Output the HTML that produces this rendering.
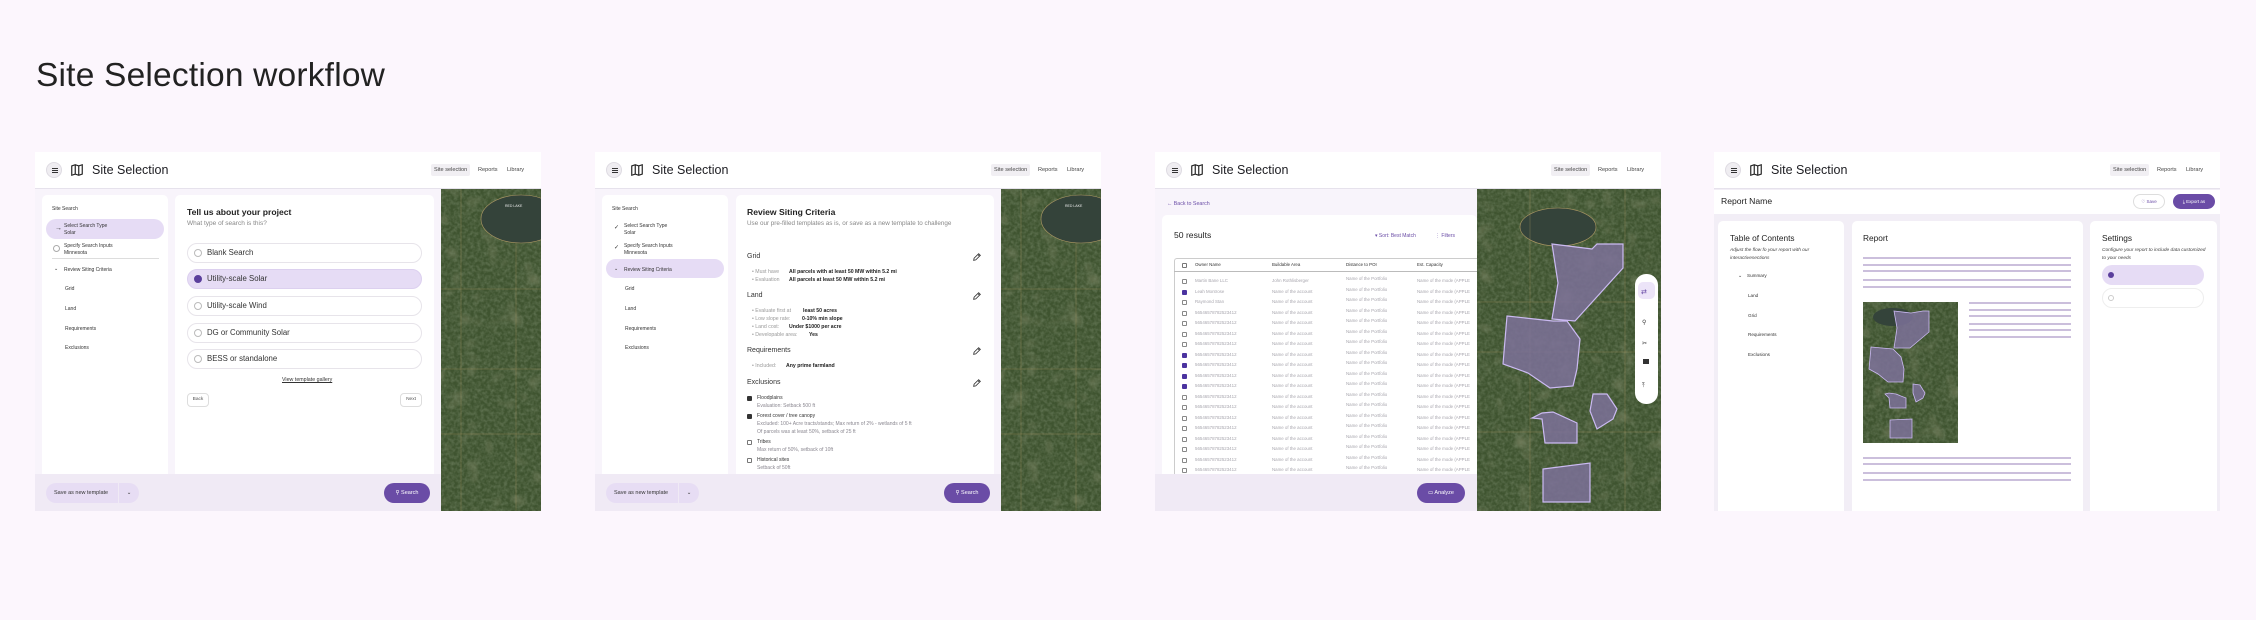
<!DOCTYPE html>
<html><head><meta charset="utf-8"><style>
*{margin:0;padding:0;box-sizing:border-box}
body{width:2256px;height:620px;background:#fcf6fd;font-family:"Liberation Sans",sans-serif;position:relative;overflow:hidden;color:#1f1f24}
.abs{position:absolute}
h1{position:absolute;left:36px;top:57px;font-size:33.5px;font-weight:400;color:#222;letter-spacing:0.2px}
.panel{position:absolute;top:152px;width:506px;height:359px;background:#f8f4fb;overflow:hidden}
.hdr{position:absolute;left:0;top:0;width:506px;height:37px;background:#fff;border-bottom:1px solid #e6e2ec}
.menu{position:absolute;left:11px;top:10px;width:16px;height:16px;border-radius:50%;background:#efedf1;border:1px solid #dedbe2}
.menu i{position:absolute;left:4.5px;width:6px;height:1px;background:#333}
.title{position:absolute;left:57px;top:11px;font-size:12.5px;color:#1d1d22}
.nav{position:absolute;top:12px;font-size:5.6px;color:#444;height:12px;line-height:12px}
.navsel{background:#f1eff3;border-radius:2px;padding:0 3px}
.card{position:absolute;background:#fff;border-radius:5px}
.t5{font-size:5px;color:#333;position:absolute;white-space:nowrap}
.g{color:#8a8790}
.foot{position:absolute;left:0;top:322px;height:37px;background:#f0eaf5}
.pill{position:absolute;background:#e7ddf4;font-size:5.5px;color:#333;line-height:20px;top:9px;height:20px}
.btn{position:absolute;top:9px;height:20px;border-radius:10px;background:#6a4ca6;color:#fff;font-size:5.5px;line-height:20px;text-align:center}
.opt{position:absolute;left:152px;width:235px;height:20px;border-radius:10px;border:1px solid #e7e4ea;background:#fff;font-size:7.8px;line-height:18px;padding-left:19px;color:#333}
.opt b{position:absolute;left:6px;top:5px;width:8px;height:8px;border-radius:50%;border:1px solid #bbb}
.map{position:absolute;top:37px}
.sec{position:absolute;left:152px;font-size:7px;color:#333}
.pen{position:absolute;left:377px;width:10px;height:10px}
.li{position:absolute;left:157px;font-size:5.2px;color:#999;white-space:nowrap}
.li b{color:#222;position:absolute}
.cb{position:absolute;width:5px;height:5px;border:0.8px solid #777;border-radius:1px}
.cbk{background:#333;border-color:#333}
.row{position:absolute;left:19px;width:300px;height:10.5px;font-size:4.4px;color:#a8a6ae;white-space:nowrap}
.row span{position:absolute;top:2px}
.row .c{left:8px;top:3px;width:5px;height:5px;border:0.8px solid #888;border-radius:1px}
.row .k{background:#4b33a0;border-color:#4b33a0}
.ln{position:absolute;height:2px;background:#cbbfdc}
</style></head><body>
<h1>Site Selection workflow</h1>

<svg width="0" height="0" style="position:absolute"><defs>
<filter id="n" x="0" y="0" width="100%" height="100%"><feTurbulence type="fractalNoise" baseFrequency="0.3" numOctaves="2" seed="3"/><feColorMatrix values="0 0 0 0 0.16  0 0 0 0 0.22  0 0 0 0 0.12  0 0 0 1.2 -0.4"/></filter>
<filter id="n2" x="0" y="0" width="100%" height="100%"><feTurbulence type="fractalNoise" baseFrequency="0.05" numOctaves="2" seed="7"/><feColorMatrix values="0 0 0 0 0.42  0 0 0 0 0.4  0 0 0 0 0.26  0 0 0 1.2 -0.7"/></filter>
</defs></svg>

<!-- PANEL 1 -->
<div class="panel" style="left:35px">
 <div class="hdr">
  <div class="menu"><i style="top:5px"></i><i style="top:7px"></i><i style="top:9px"></i></div>
  <svg class="abs" style="left:35px;top:11px" width="14" height="14" viewBox="0 0 24 24" fill="none" stroke="#222" stroke-width="2"><path d="M3 5l6-2 6 2 6-2v16l-6 2-6-2-6 2z M9 3v16 M15 5v16"/></svg>
  <div class="title">Site Selection</div>
  <div class="nav navsel" style="left:396px">Site selection</div>
  <div class="nav" style="left:443px">Reports</div>
  <div class="nav" style="left:472px">Library</div>
 </div>
 <div class="card" style="left:7px;top:43px;width:126px;height:290px"></div>
 <div class="t5" style="left:17px;top:54px">Site Search</div>
 <div class="abs" style="left:11px;top:67px;width:118px;height:20px;border-radius:10px;background:#e6dcf5"></div>
 <div class="t5" style="left:20px;top:73px;font-size:7px">→</div>
 <div class="t5" style="left:29px;top:71px;line-height:7px">Select Search Type<br>Solar</div>
 <div class="abs" style="left:18px;top:93px;width:7px;height:7px;border-radius:50%;border:1px solid #aaa"></div>
 <div class="t5" style="left:29px;top:91px;line-height:7px">Specify Search Inputs<br>Minnesota</div>
 <div class="abs" style="left:17px;top:106px;width:107px;height:1px;background:#ddd"></div>
 <div class="t5" style="left:19px;top:114px">⌄</div>
 <div class="t5" style="left:29px;top:115px">Review Siting Criteria</div>
 <div class="t5" style="left:30px;top:134px">Grid</div>
 <div class="t5" style="left:30px;top:154px">Land</div>
 <div class="t5" style="left:30px;top:174px">Requirements</div>
 <div class="t5" style="left:30px;top:193px">Exclusions</div>

 <div class="card" style="left:140px;top:43px;width:259px;height:290px"></div>
 <div class="abs" style="left:152px;top:55px;font-size:8.6px;font-weight:bold;color:#222">Tell us about your project</div>
 <div class="abs" style="left:152px;top:68px;font-size:6.5px;color:#888">What type of search is this?</div>
 <div class="opt" style="top:91px"><b></b>Blank Search</div>
 <div class="opt" style="top:117px;background:#e6dcf5;border-color:#dcd0ef"><b style="background:#5b3f9c;border-color:#5b3f9c"></b>Utility-scale Solar</div>
 <div class="opt" style="top:144px"><b></b>Utility-scale Wind</div>
 <div class="opt" style="top:171px"><b></b>DG or Community Solar</div>
 <div class="opt" style="top:197px"><b></b>BESS or standalone</div>
 <div class="t5" style="left:247px;top:225px;text-decoration:underline;font-size:5.3px">View template gallery</div>
 <div class="abs" style="left:152px;top:241px;width:22px;height:14px;border:1px solid #ddd;border-radius:4px;background:#fff;font-size:4.8px;text-align:center;line-height:12px;color:#555">Back</div>
 <div class="abs" style="left:365px;top:241px;width:22px;height:14px;border:1px solid #ddd;border-radius:4px;background:#fff;font-size:4.8px;text-align:center;line-height:12px;color:#555">Next</div>

 <div class="foot" style="width:406px">
  <div class="pill" style="left:11px;width:72px;border-radius:10px 0 0 10px;padding-left:8px">Save as new template</div>
  <div class="pill" style="left:84px;width:20px;border-radius:0 10px 10px 0;text-align:center">⌄</div>
  <div class="btn" style="left:349px;width:46px">⚲ Search</div>
 </div>
 <svg class="map" style="left:406px" width="100" height="322">
  <rect width="100" height="322" fill="#3f5430"/>
  <rect width="100" height="322" filter="url(#n2)"/>
  <rect width="100" height="322" filter="url(#n)"/>
  <ellipse cx="80" cy="30" rx="40" ry="24" fill="#34433a" stroke="#b09a66" stroke-width=".6"/>
  <path d="M0 100 H100 M0 180 H100 M20 0 V322 M75 54 V322 M0 245 H100" stroke="#b09a66" stroke-width=".5" opacity=".6" fill="none"/>
  <text x="64" y="18" font-size="3.5" fill="#eee" font-family="Liberation Sans">RED LAKE</text>
 </svg>
</div>

<!-- PANEL 2 -->
<div class="panel" style="left:595px">
 <div class="hdr">
  <div class="menu"><i style="top:5px"></i><i style="top:7px"></i><i style="top:9px"></i></div>
  <svg class="abs" style="left:35px;top:11px" width="14" height="14" viewBox="0 0 24 24" fill="none" stroke="#222" stroke-width="2"><path d="M3 5l6-2 6 2 6-2v16l-6 2-6-2-6 2z M9 3v16 M15 5v16"/></svg>
  <div class="title">Site Selection</div>
  <div class="nav navsel" style="left:396px">Site selection</div>
  <div class="nav" style="left:443px">Reports</div>
  <div class="nav" style="left:472px">Library</div>
 </div>
 <div class="card" style="left:7px;top:43px;width:126px;height:290px"></div>
 <div class="t5" style="left:17px;top:54px">Site Search</div>
 <div class="t5" style="left:19px;top:72px;font-size:6px">✓</div>
 <div class="t5" style="left:29px;top:71px;line-height:7px">Select Search Type<br>Solar</div>
 <div class="t5" style="left:19px;top:92px;font-size:6px">✓</div>
 <div class="t5" style="left:29px;top:91px;line-height:7px">Specify Search Inputs<br>Minnesota</div>
 <div class="abs" style="left:11px;top:107px;width:118px;height:19px;border-radius:10px;background:#e6dcf5"></div>
 <div class="t5" style="left:19px;top:114px">⌄</div>
 <div class="t5" style="left:29px;top:115px">Review Siting Criteria</div>
 <div class="t5" style="left:30px;top:134px">Grid</div>
 <div class="t5" style="left:30px;top:154px">Land</div>
 <div class="t5" style="left:30px;top:174px">Requirements</div>
 <div class="t5" style="left:30px;top:193px">Exclusions</div>

 <div class="card" style="left:141px;top:43px;width:258px;height:290px"></div>
 <div class="abs" style="left:152px;top:55px;font-size:8.6px;font-weight:bold;color:#222">Review Siting Criteria</div>
 <div class="abs" style="left:152px;top:68px;font-size:6.3px;color:#888;width:215px;line-height:8.5px">Use our pre-filled templates as is, or save as a new template to challenge</div>
 <div class="sec" style="top:101px">Grid</div>
 <div class="li" style="top:117px">• Must have <b style="left:37px">All parcels with at least 50 MW within 5.2 mi</b></div>
 <div class="li" style="top:125px">• Evaluation <b style="left:37px">All parcels at least 50 MW within 5.2 mi</b></div>
 <div class="sec" style="top:140px">Land</div>
 <div class="li" style="top:156px">• Evaluate first at <b style="left:51px">least 50 acres</b></div>
 <div class="li" style="top:164px">• Low slope rate: <b style="left:50px">0-10% min slope</b></div>
 <div class="li" style="top:172px">• Land cost: <b style="left:37px">Under $1000 per acre</b></div>
 <div class="li" style="top:180px">• Developable area: <b style="left:57px">Yes</b></div>
 <div class="sec" style="top:195px">Requirements</div>
 <div class="li" style="top:211px">• Included: <b style="left:34px">Any prime farmland</b></div>
 <div class="sec" style="top:227px">Exclusions</div>
 <div class="cb cbk" style="left:152px;top:244px"></div>
 <div class="t5" style="left:162px;top:243px">Floodplains</div>
 <div class="t5 g" style="left:162px;top:251px">Evaluation: Setback 500 ft</div>
 <div class="cb cbk" style="left:152px;top:262px"></div>
 <div class="t5" style="left:162px;top:261px">Forest cover / tree canopy</div>
 <div class="t5 g" style="left:162px;top:269px">Excluded: 100+ Acre tracts/stands; Max return of 2% - wetlands of 5 ft</div>
 <div class="t5 g" style="left:162px;top:277px">Of parcels was at least 50%, setback of 25 ft</div>
 <div class="cb" style="left:152px;top:288px"></div>
 <div class="t5" style="left:162px;top:287px">Tribes</div>
 <div class="t5 g" style="left:162px;top:295px">Max return of 50%, setback of 10ft</div>
 <div class="cb" style="left:152px;top:306px"></div>
 <div class="t5" style="left:162px;top:305px">Historical sites</div>
 <div class="t5 g" style="left:162px;top:313px">Setback of 50ft</div>
 <svg class="pen" style="top:100px" viewBox="0 0 24 24" fill="none" stroke="#333" stroke-width="2"><path d="M4 20l1-5L16 4l4 4L9 19z M14 6l4 4"/></svg>
 <svg class="pen" style="top:139px" viewBox="0 0 24 24" fill="none" stroke="#333" stroke-width="2"><path d="M4 20l1-5L16 4l4 4L9 19z M14 6l4 4"/></svg>
 <svg class="pen" style="top:194px" viewBox="0 0 24 24" fill="none" stroke="#333" stroke-width="2"><path d="M4 20l1-5L16 4l4 4L9 19z M14 6l4 4"/></svg>
 <svg class="pen" style="top:226px" viewBox="0 0 24 24" fill="none" stroke="#333" stroke-width="2"><path d="M4 20l1-5L16 4l4 4L9 19z M14 6l4 4"/></svg>

 <div class="foot" style="width:406px">
  <div class="pill" style="left:11px;width:72px;border-radius:10px 0 0 10px;padding-left:8px">Save as new template</div>
  <div class="pill" style="left:84px;width:20px;border-radius:0 10px 10px 0;text-align:center">⌄</div>
  <div class="btn" style="left:349px;width:46px">⚲ Search</div>
 </div>
 <svg class="map" style="left:406px" width="100" height="322">
  <rect width="100" height="322" fill="#3f5430"/>
  <rect width="100" height="322" filter="url(#n2)"/>
  <rect width="100" height="322" filter="url(#n)"/>
  <ellipse cx="80" cy="30" rx="40" ry="24" fill="#34433a" stroke="#b09a66" stroke-width=".6"/>
  <path d="M0 100 H100 M0 180 H100 M20 0 V322 M75 54 V322 M0 245 H100" stroke="#b09a66" stroke-width=".5" opacity=".6" fill="none"/>
  <text x="64" y="18" font-size="3.5" fill="#eee" font-family="Liberation Sans">RED LAKE</text>
 </svg>
</div>

<!-- PANEL 3 -->
<div class="panel" style="left:1155px">
 <div class="hdr">
  <div class="menu"><i style="top:5px"></i><i style="top:7px"></i><i style="top:9px"></i></div>
  <svg class="abs" style="left:35px;top:11px" width="14" height="14" viewBox="0 0 24 24" fill="none" stroke="#222" stroke-width="2"><path d="M3 5l6-2 6 2 6-2v16l-6 2-6-2-6 2z M9 3v16 M15 5v16"/></svg>
  <div class="title">Site Selection</div>
  <div class="nav navsel" style="left:396px">Site selection</div>
  <div class="nav" style="left:443px">Reports</div>
  <div class="nav" style="left:472px">Library</div>
 </div>
 <div class="t5" style="left:12px;top:49px;color:#6a4ca6;font-size:5.3px">← Back to Search</div>
 <div class="card" style="left:7px;top:63px;width:315px;height:280px"></div>
 <div class="abs" style="left:19px;top:78px;font-size:8.6px;color:#222">50 results</div>
 <div class="t5" style="left:220px;top:81px;color:#6a4ca6">▾ Sort: Best Match</div>
 <div class="t5" style="left:280px;top:81px;color:#6a4ca6">⋮ Filters</div>
 <div class="abs" style="left:19px;top:106px;width:310px;height:230px;border:1px solid #ccc;border-right:none;border-radius:3px 0 0 0"></div>
 <div class="abs" style="left:19px;top:119px;width:310px;height:1px;background:#bbb"></div>
 <div class="cb" style="left:27px;top:111px"></div>
 <div class="t5" style="left:40px;top:110px;font-size:4.4px">Owner Name</div>
 <div class="t5" style="left:117px;top:110px;font-size:4.4px">Buildable Area</div>
 <div class="t5" style="left:191px;top:110px;font-size:4.4px">Distance to POI</div>
 <div class="t5" style="left:262px;top:110px;font-size:4.4px">Est. Capacity</div>
 <div class="row" style="top:124px"><i class="abs c"></i><span style="left:21px">Martin Bane LLC</span><span style="left:98px">John Rothlisberger</span><span style="left:172px;top:0">Name of the Portfolio</span><span style="left:243px">Name of the mode (APPLE</span></div>
 <div class="row" style="top:134.5px"><i class="abs c k"></i><span style="left:21px">Leah Montrose</span><span style="left:98px">Name of the account</span><span style="left:172px;top:0">Name of the Portfolio</span><span style="left:243px">Name of the mode (APPLE</span></div>
 <div class="row" style="top:145px"><i class="abs c"></i><span style="left:21px">Raymond Stan</span><span style="left:98px">Name of the account</span><span style="left:172px;top:0">Name of the Portfolio</span><span style="left:243px">Name of the mode (APPLE</span></div>
 <div class="row" style="top:155.5px"><i class="abs c"></i><span style="left:21px">56546578782523412</span><span style="left:98px">Name of the account</span><span style="left:172px;top:0">Name of the Portfolio</span><span style="left:243px">Name of the mode (APPLE</span></div>
 <div class="row" style="top:166px"><i class="abs c"></i><span style="left:21px">56546578782523412</span><span style="left:98px">Name of the account</span><span style="left:172px;top:0">Name of the Portfolio</span><span style="left:243px">Name of the mode (APPLE</span></div>
 <div class="row" style="top:176.5px"><i class="abs c"></i><span style="left:21px">56546578782523412</span><span style="left:98px">Name of the account</span><span style="left:172px;top:0">Name of the Portfolio</span><span style="left:243px">Name of the mode (APPLE</span></div>
 <div class="row" style="top:187px"><i class="abs c"></i><span style="left:21px">56546578782523412</span><span style="left:98px">Name of the account</span><span style="left:172px;top:0">Name of the Portfolio</span><span style="left:243px">Name of the mode (APPLE</span></div>
 <div class="row" style="top:197.5px"><i class="abs c k"></i><span style="left:21px">56546578782523412</span><span style="left:98px">Name of the account</span><span style="left:172px;top:0">Name of the Portfolio</span><span style="left:243px">Name of the mode (APPLE</span></div>
 <div class="row" style="top:208px"><i class="abs c k"></i><span style="left:21px">56546578782523412</span><span style="left:98px">Name of the account</span><span style="left:172px;top:0">Name of the Portfolio</span><span style="left:243px">Name of the mode (APPLE</span></div>
 <div class="row" style="top:218.5px"><i class="abs c k"></i><span style="left:21px">56546578782523412</span><span style="left:98px">Name of the account</span><span style="left:172px;top:0">Name of the Portfolio</span><span style="left:243px">Name of the mode (APPLE</span></div>
 <div class="row" style="top:229px"><i class="abs c k"></i><span style="left:21px">56546578782523412</span><span style="left:98px">Name of the account</span><span style="left:172px;top:0">Name of the Portfolio</span><span style="left:243px">Name of the mode (APPLE</span></div>
 <div class="row" style="top:239.5px"><i class="abs c"></i><span style="left:21px">56546578782523412</span><span style="left:98px">Name of the account</span><span style="left:172px;top:0">Name of the Portfolio</span><span style="left:243px">Name of the mode (APPLE</span></div>
 <div class="row" style="top:250px"><i class="abs c"></i><span style="left:21px">56546578782523412</span><span style="left:98px">Name of the account</span><span style="left:172px;top:0">Name of the Portfolio</span><span style="left:243px">Name of the mode (APPLE</span></div>
 <div class="row" style="top:260.5px"><i class="abs c"></i><span style="left:21px">56546578782523412</span><span style="left:98px">Name of the account</span><span style="left:172px;top:0">Name of the Portfolio</span><span style="left:243px">Name of the mode (APPLE</span></div>
 <div class="row" style="top:271px"><i class="abs c"></i><span style="left:21px">56546578782523412</span><span style="left:98px">Name of the account</span><span style="left:172px;top:0">Name of the Portfolio</span><span style="left:243px">Name of the mode (APPLE</span></div>
 <div class="row" style="top:281.5px"><i class="abs c"></i><span style="left:21px">56546578782523412</span><span style="left:98px">Name of the account</span><span style="left:172px;top:0">Name of the Portfolio</span><span style="left:243px">Name of the mode (APPLE</span></div>
 <div class="row" style="top:292px"><i class="abs c"></i><span style="left:21px">56546578782523412</span><span style="left:98px">Name of the account</span><span style="left:172px;top:0">Name of the Portfolio</span><span style="left:243px">Name of the mode (APPLE</span></div>
 <div class="row" style="top:302.5px"><i class="abs c"></i><span style="left:21px">56546578782523412</span><span style="left:98px">Name of the account</span><span style="left:172px;top:0">Name of the Portfolio</span><span style="left:243px">Name of the mode (APPLE</span></div>
 <div class="row" style="top:313px"><i class="abs c"></i><span style="left:21px">56546578782523412</span><span style="left:98px">Name of the account</span><span style="left:172px;top:0">Name of the Portfolio</span><span style="left:243px">Name of the mode (APPLE</span></div>
 <div class="foot" style="width:322px">
  <div class="btn" style="left:262px;width:48px">▭ Analyze</div>
 </div>
 <svg class="map" style="left:322px" width="184" height="322" viewBox="322 37 184 322">
  <rect x="322" y="37" width="184" height="322" fill="#3f5430"/>
  <rect x="322" y="37" width="184" height="322" filter="url(#n2)"/>
  <rect x="322" y="37" width="184" height="322" filter="url(#n)"/>
  <ellipse cx="403" cy="75" rx="38" ry="19" fill="#34433a" stroke="#b09a66" stroke-width=".6"/>
  <path d="M322 150 H506 M322 200 H506 M375 37 V359 M470 37 V359 M322 280 H506" stroke="#b09a66" stroke-width=".5" opacity=".6" fill="none"/>
  <g fill="#7d7199" fill-opacity=".85" stroke="#cbbaf2" stroke-width="1.2">
   <path d="M397 92L437 97L442 92L468 92L468 116L420 169L397 167L403 131Z"/>
   <path d="M352 164L398 169L412 169L425 187L422 217L418 234L395 236L373 221L348 212Z"/>
   <path d="M438 242L452 242L462 257L458 267L442 277L435 259Z"/>
   <path d="M377 266L387 261L398 260L422 271L422 291L390 291L387 267Z"/>
   <path d="M388 317L435 311L435 350L388 350Z"/>
  </g>
  <rect x="480" y="122" width="23" height="130" rx="11" fill="#fff"/>
  <rect x="483" y="130" width="17" height="17" rx="5" fill="#ece4f8"/>
  <text x="486" y="142" font-size="7" fill="#6a4ca6" font-family="DejaVu Sans">⇄</text>
  <text x="487" y="172" font-size="6" fill="#333" font-family="DejaVu Sans">⚲</text>
  <text x="487" y="193" font-size="6" fill="#333" font-family="DejaVu Sans">✂</text>
  <rect x="488" y="207" width="6" height="5" fill="#333"/>
  <text x="487" y="235" font-size="6" fill="#333" font-family="DejaVu Sans">⤒</text>
 </svg>
</div>

<!-- PANEL 4 -->
<div class="panel" style="left:1714px;background:#f2eef6">
 <div class="hdr">
  <div class="menu"><i style="top:5px"></i><i style="top:7px"></i><i style="top:9px"></i></div>
  <svg class="abs" style="left:35px;top:11px" width="14" height="14" viewBox="0 0 24 24" fill="none" stroke="#222" stroke-width="2"><path d="M3 5l6-2 6 2 6-2v16l-6 2-6-2-6 2z M9 3v16 M15 5v16"/></svg>
  <div class="title">Site Selection</div>
  <div class="nav navsel" style="left:396px">Site selection</div>
  <div class="nav" style="left:443px">Reports</div>
  <div class="nav" style="left:472px">Library</div>
 </div>
 <div class="abs" style="left:0;top:38px;width:506px;height:24px;background:#fff"></div>
 <div class="abs" style="left:7px;top:44px;font-size:8.6px;color:#222">Report Name</div>
 <div class="abs" style="left:419px;top:42px;width:32px;height:15px;border:1px solid #ddd;border-radius:8px;background:#fff;font-size:4.5px;color:#6a4ca6;text-align:center;line-height:13px">♡ Save</div>
 <div class="abs" style="left:459px;top:42px;width:42px;height:15px;border-radius:8px;background:#6a4ca6;font-size:4.5px;color:#fff;text-align:center;line-height:15px">⤓ Export as</div>

 <div class="card" style="left:4px;top:69px;width:126px;height:300px"></div>
 <div class="abs" style="left:16px;top:81px;font-size:8.3px;color:#222">Table of Contents</div>
 <div class="abs" style="left:16px;top:95px;font-size:4.8px;color:#444;font-style:italic;line-height:8px;width:105px">Adjust the flow fo your report with our interactivesections</div>
 <div class="t5" style="left:24px;top:121px">⌄</div>
 <div class="t5" style="left:33px;top:121px;font-size:4.6px">Summary</div>
 <div class="t5" style="left:34px;top:141px;font-size:4.6px">Land</div>
 <div class="t5" style="left:34px;top:161px;font-size:4.6px">Grid</div>
 <div class="t5" style="left:34px;top:180px;font-size:4.6px">Requirements</div>
 <div class="t5" style="left:34px;top:200px;font-size:4.6px">Exclusions</div>

 <div class="card" style="left:138px;top:69px;width:231px;height:300px"></div>
 <div class="abs" style="left:149px;top:81px;font-size:8.3px;color:#222">Report</div>
 <div class="ln" style="left:149px;top:105px;width:208px"></div>
 <div class="ln" style="left:149px;top:112px;width:208px"></div>
 <div class="ln" style="left:149px;top:118px;width:208px"></div>
 <div class="ln" style="left:149px;top:127px;width:208px"></div>
 <div class="ln" style="left:149px;top:134px;width:208px"></div>
 <div class="ln" style="left:255px;top:150px;width:102px"></div>
 <div class="ln" style="left:255px;top:157px;width:102px"></div>
 <div class="ln" style="left:255px;top:163px;width:102px"></div>
 <div class="ln" style="left:255px;top:171px;width:102px"></div>
 <div class="ln" style="left:255px;top:177px;width:102px"></div>
 <div class="ln" style="left:255px;top:184px;width:102px"></div>
 <div class="ln" style="left:149px;top:305px;width:208px"></div>
 <div class="ln" style="left:149px;top:311px;width:208px"></div>
 <div class="ln" style="left:149px;top:320px;width:208px"></div>
 <div class="ln" style="left:149px;top:327px;width:208px"></div>
 <svg class="abs" style="left:149px;top:150px" width="95" height="141" viewBox="0 0 95 141">
  <rect width="95" height="141" fill="#3f5430"/>
  <rect width="95" height="141" filter="url(#n2)"/>
  <rect width="95" height="141" filter="url(#n)"/>
  <ellipse cx="30" cy="15" rx="20" ry="9" fill="#34433a"/>
  <g fill="#7d7199" fill-opacity=".85" stroke="#cbbaf2" stroke-width=".8">
   <path d="M31 9L48 11L60 9L66 9L66 30L47 46L31 46L34 26Z"/>
   <path d="M8 45L30 47L38 55L41 67L40 80L25 80L15 72L6 67Z"/>
   <path d="M50 82L57 83L62 91L60 96L53 100L50 91Z"/>
   <path d="M22 92L26 91L33 92L43 96L43 106L27 106L26 96Z"/>
   <path d="M27 118L49 117L49 136L27 136Z"/>
  </g>
 </svg>

 <div class="card" style="left:376px;top:69px;width:127px;height:300px"></div>
 <div class="abs" style="left:388px;top:81px;font-size:8.3px;color:#222">Settings</div>
 <div class="abs" style="left:388px;top:95px;font-size:4.8px;color:#444;font-style:italic;line-height:8px;width:105px">Configure your report to include data customized to your needs</div>
 <div class="abs" style="left:388px;top:113px;width:102px;height:20px;border-radius:10px;background:#e6dcf5"></div>
 <div class="abs" style="left:394px;top:120px;width:6px;height:6px;border-radius:50%;background:#5b3f9c"></div>
 <div class="abs" style="left:388px;top:136px;width:102px;height:20px;border-radius:10px;background:#fff;border:1px solid #eee"></div>
 <div class="abs" style="left:394px;top:143px;width:6px;height:6px;border-radius:50%;border:1px solid #ccc"></div>
</div>
</body></html>
